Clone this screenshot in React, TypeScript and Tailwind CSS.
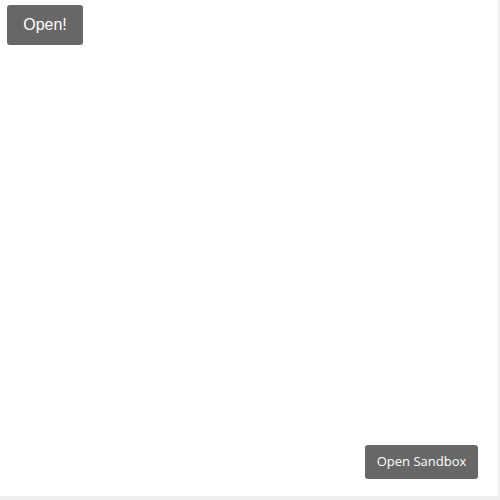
export default function App() {
  return (
    <div className="w-[500px] h-[500px] bg-[#efefef]">
      <div className="w-[498px] h-[496px] bg-white flex flex-col justify-between">
        <div className="pt-[5px] pl-[7px]">
          <button
            className="w-[76px] h-[40px] bg-[#666766] text-white rounded-[3px] text-[16px]"
            style={{ fontFamily: "'Liberation Sans', Arial, sans-serif" }}
          >
            Open!
          </button>
        </div>
        <div className="flex justify-end pr-[20px] pb-[17px]">
          <button
            className="w-[113px] h-[34px] bg-[#666766] text-white rounded-[3px] text-[13px]"
            style={{ fontFamily: "'Open Sans', sans-serif" }}
          >
            Open Sandbox
          </button>
        </div>
      </div>
    </div>
  );
}
